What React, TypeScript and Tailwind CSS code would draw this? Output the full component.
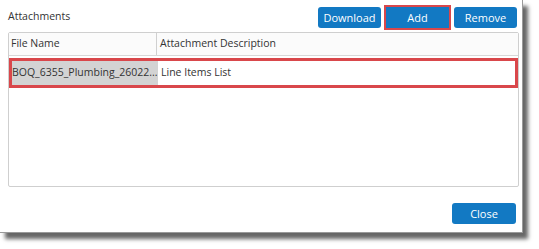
export default function App() {
  const btn =
    'h-[21px] w-[63px] rounded-[3px] bg-[#1279c3] text-[11px] leading-none text-white flex items-center justify-center';

  return (
    <div
      className="w-[539px] h-[249px] bg-white text-[#333]"
      style={{ fontFamily: '"Open Sans", "Segoe UI", "Noto Sans", sans-serif' }}
    >
      <div className="w-[523px] h-[233px] bg-white border-r border-b border-[#9a9a9a] shadow-[5px_6px_4px_rgba(0,0,0,0.6)] flex flex-col pl-[8px] pr-[5px] pt-[7px]">
        {/* toolbar */}
        <div className="flex items-center h-[21px]">
          <span className="text-[10.5px] flex-1 -mt-[2px]">Attachments</span>
          <div className="flex gap-[5px]">
            <button className={btn}>Download</button>
            <span className="-m-[2px] border-2 border-[#d9474b]">
              <button className={btn + ' rounded-none'}>Add</button>
            </span>
            <button className={btn}>Remove</button>
          </div>
        </div>

        {/* grid */}
        <div className="mt-[4px] h-[155px] w-[511px] border border-[#cfcfcf] rounded-[2px] flex flex-col text-[10.5px]">
          <div className="flex h-[23px] border-b border-[#d8d8d8] bg-[#fbfbfb]">
            <div className="w-[148px] border-r border-[#d0d0d0] pl-[2px] flex items-center">File Name</div>
            <div className="flex-1 pl-[3px] flex items-center">Attachment Description</div>
          </div>
          <div className="mt-[2px] h-[30px] border-[3px] border-[#d9474b] flex">
            <div className="w-[146px] shrink-0 bg-[#d3d3d3] flex items-center whitespace-nowrap">
              BOQ_6355_Plumbing_26022...
            </div>
            <div className="flex-1 pl-[3px] flex items-center">Line Items List</div>
          </div>
        </div>

        {/* footer */}
        <div className="flex justify-end mt-[16px] pr-[1px]">
          <button className={btn + ' w-[64px]'}>Close</button>
        </div>
      </div>
    </div>
  );
}
